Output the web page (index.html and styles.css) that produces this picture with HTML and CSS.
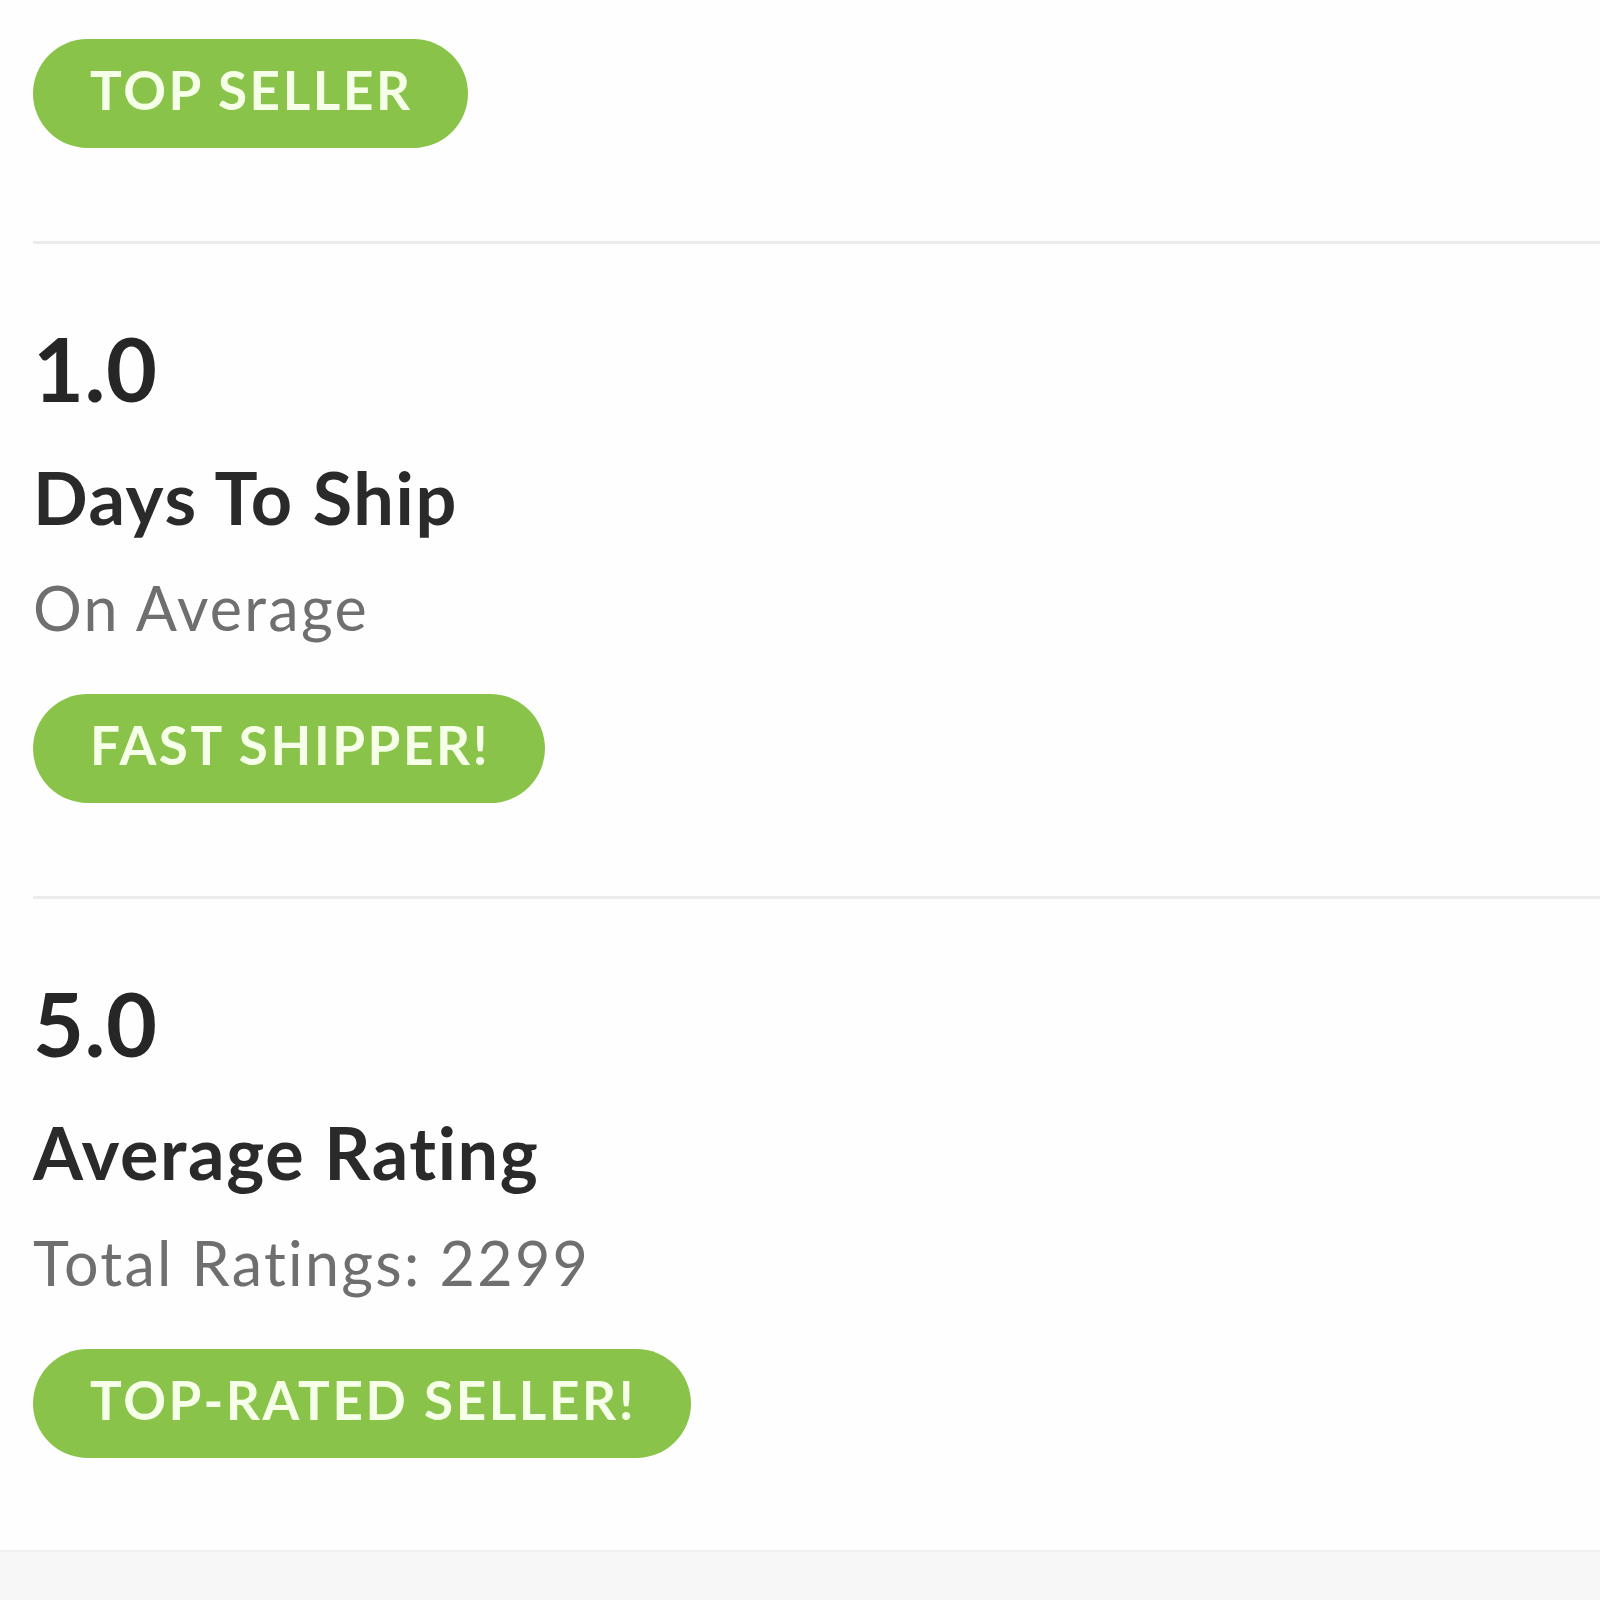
FILE: index.html
```html
<!DOCTYPE html>
<html>
<head>
<meta charset="utf-8">
<link rel="stylesheet" href="styles.css">
</head>
<body>
<div class="page">
  <section class="stat first">
    <span class="badge">TOP SELLER</span>
  </section>
  <section class="stat">
    <div class="value">1.0</div>
    <div class="label">Days To Ship</div>
    <div class="sub">On Average</div>
    <span class="badge">FAST SHIPPER!</span>
  </section>
  <section class="stat last">
    <div class="value">5.0</div>
    <div class="label">Average Rating</div>
    <div class="sub">Total Ratings: 2299</div>
    <span class="badge">TOP-RATED SELLER!</span>
  </section>
  <div class="footer-band"></div>
</div>
</body>
</html>
```
FILE: styles.css
```css
html, body {
  margin: 0;
  padding: 0;
  background: #fefefe;
}
body {
  font-family: Lato, "Noto Sans", sans-serif;
  font-variant-ligatures: none;
  width: 1600px;
  height: 1600px;
  overflow: hidden;
}
.page {
  display: flex;
  flex-direction: column;
}
.stat {
  margin-left: 33px;
  display: flex;
  flex-direction: column;
  align-items: flex-start;
  padding-top: 80px;
  padding-bottom: 93px;
  border-bottom: 3px solid #ececec;
}
.stat.first {
  padding-top: 39px;
}
.stat.last {
  border-bottom: none;
  padding-bottom: 92px;
}
.value {
  font-size: 88px;
  line-height: 88px;
  font-weight: 700;
  color: #262626;
  letter-spacing: 0.5px;
}
.label {
  margin-top: 49px;
  font-size: 72px;
  line-height: 72px;
  font-weight: 700;
  color: #2a2a2a;
  letter-spacing: 1.6px;
}
.sub {
  margin-top: 44px;
  font-size: 61px;
  line-height: 62px;
  font-weight: 400;
  color: #6f6f6f;
  letter-spacing: 2.3px;
}
.sub + .badge {
  margin-top: 55px;
}
.badge {
  display: inline-flex;
  align-items: center;
  height: 109px;
  padding: 0 55px 9px 57px;
  box-sizing: border-box;
  border-radius: 55px;
  background: #89c34a;
  color: #f6ffe8;
  font-size: 53px;
  font-weight: 700;
  letter-spacing: 2.6px;
}
.footer-band {
  height: 60px;
  background: #f7f7f7;
  border-top: 2px solid #f0f0f0;
}
```
